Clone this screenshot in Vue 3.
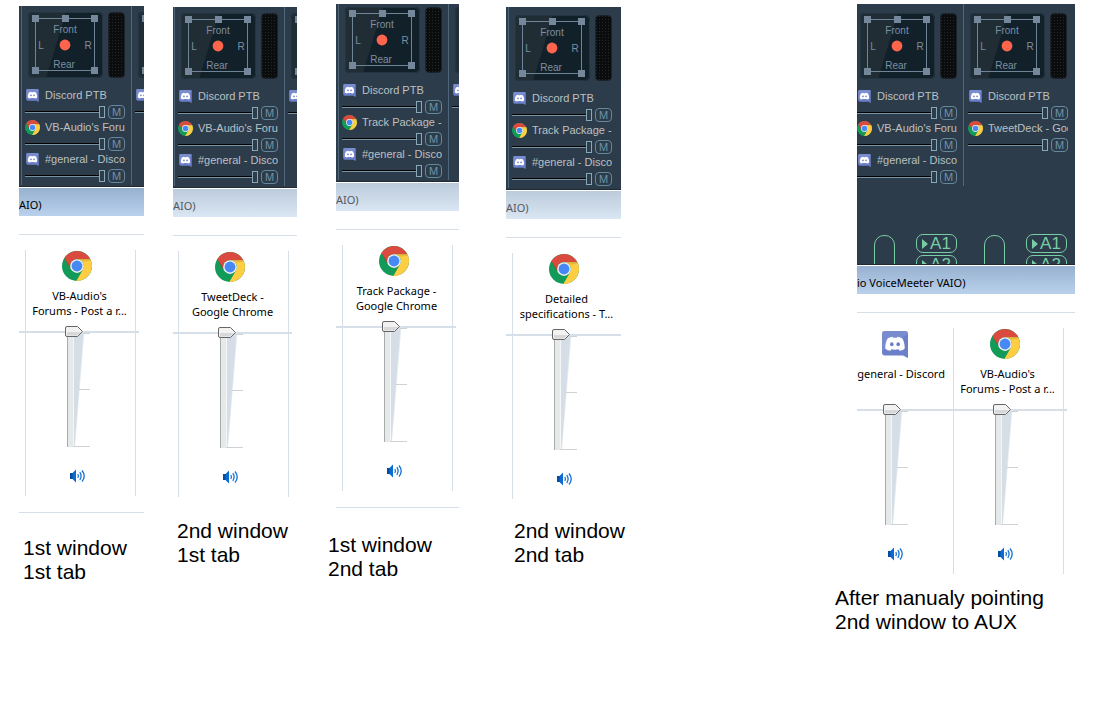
<script setup>
const discord = 'discord'
const chrome = 'chrome'

const ptb = { icon: discord, name: 'Discord PTB' }
const general = { icon: discord, name: '#general - Discor' }
const forums = { icon: chrome, name: "VB-Audio's Foru" }
const track = { icon: chrome, name: 'Track Package -' }
const tweet = { icon: chrome, name: 'TweetDeck - Goo' }

const full = (...rows) => ({ rows })
const edge = { rows: [{ icon: discord, name: '' }], edge: true }

const postSession = { icon: chrome, lines: ["VB-Audio's", 'Forums - Post a r...'] }

const clips = [
  {
    id: 'one', title: 'AIO)', active: true, closed: true,
    strips: [full(ptb, forums, general), edge],
    sessions: [postSession],
    caption: ['1st window', '1st tab'],
  },
  {
    id: 'two', title: 'AIO)',
    strips: [full(ptb, forums, general), edge],
    sessions: [{ icon: chrome, lines: ['TweetDeck -', 'Google Chrome'] }],
    caption: ['2nd window', '1st tab'],
  },
  {
    id: 'three', title: 'AIO)', closed: true,
    strips: [full(ptb, track, general), edge],
    sessions: [{ icon: chrome, lines: ['Track Package -', 'Google Chrome'] }],
    caption: ['1st window', '2nd tab'],
  },
  {
    id: 'four', title: 'AIO)',
    strips: [full(ptb, track, general)],
    sessions: [{ icon: chrome, lines: ['Detailed', 'specifications - T...'] }],
    caption: ['2nd window', '2nd tab'],
  },
  {
    id: 'five', title: 'io VoiceMeeter VAIO)', active: true, buses: true,
    strips: [full(ptb, forums, general), full(ptb, tweet)],
    sessions: [{ icon: discord, lines: ['#general - Discord'] }, postSession],
    caption: ['After manualy pointing', '2nd window to AUX'],
  },
]
</script>

<template>
  <svg class="defs" aria-hidden="true">
    <symbol id="chrome" viewBox="0 0 48 48">
      <circle cx="24" cy="24" r="24" fill="#119a58" />
      <path d="M3.8 11A24 24 0 0 1 45.3 13H24A11 11 0 0 0 14.5 29.5Z" fill="#db4a3e" />
      <path d="M45.3 13A24 24 0 0 1 22.9 48L33.5 29.5A11 11 0 0 0 24 13Z" fill="#ffcd42" />
      <path d="M24 13H45.3L46 15.500L32 17Z" fill="#d9a62e" opacity=".5" />
      <path d="M3.800 11L14.500 29.500L13 24Z" fill="#8c2f28" opacity=".5" />
      <circle cx="24" cy="24" r="11" fill="#f3f1f1" />
      <circle cx="24" cy="24" r="8.700" fill="#4688f4" />
    </symbol>
    <symbol id="discord" viewBox="0 0 26 27">
      <path d="M3 0H23Q26 0 26 3V27L21 24.500H3Q0 24.500 0 21.500V3Q0 0 3 0Z" fill="#6c7fc9" />
      <path d="M3 0H23Q26 0 26 3L0 20V3Q0 0 3 0Z" fill="#8797d6" opacity=".55" />
      <path
        fill="#fff"
        d="M10.500 5.800C7.500 6.200 6 7.300 5.300 8C3.800 11 3.200 14.300 3.300 17.500C4.800 19 6.500 19.700 8.400 19.800L9.500 18.300Q13 19.200 16.500 18.300L17.600 19.800C19.500 19.700 21.200 19 22.700 17.500C22.800 14.300 22.200 11 20.700 8C20 7.300 18.500 6.200 15.500 5.800L15 6.800Q13 6.500 11 6.800Z"
      />
      <ellipse cx="9.800" cy="13.200" rx="1.800" ry="2" fill="#6c7fc9" />
      <ellipse cx="16.200" cy="13.200" rx="1.800" ry="2" fill="#6c7fc9" />
    </symbol>
  </svg>

  <main class="board">
    <section v-for="clip in clips" :key="clip.id" class="column" :class="clip.id">
      <div class="clip">
        <div class="panel">
          <div class="strips">
            <div v-for="(strip, s) in clip.strips" :key="s" class="strip">
              <div class="scope">
                <svg class="pad" viewBox="0 0 75 66" role="img" aria-label="Panner">
                  <rect width="75" height="66" rx="5" fill="#12202a" />
                  <path d="M5 0H38L18 66H5Q0 66 0 61V5Q0 0 5 0Z" fill="#212d35" />
                  <rect x=".5" y=".5" width="74" height="65" rx="5" fill="none" stroke="#243542" />
                  <rect x="7.500" y="6.500" width="59" height="52" fill="none" stroke="#6f8496" />
                  <g fill="#75879a">
                    <rect x="4" y="3" width="7" height="7" />
                    <rect x="34" y="3" width="7" height="7" />
                    <rect x="63" y="3" width="7" height="7" />
                    <rect x="4" y="55" width="7" height="7" />
                    <rect x="63" y="55" width="7" height="7" />
                  </g>
                  <circle cx="37" cy="33" r="5.400" fill="#ff654c" />
                  <g v-if="!strip.edge" class="pad-text">
                    <text x="37" y="21">Front</text>
                    <text x="13" y="37">L</text>
                    <text x="60" y="37">R</text>
                    <text x="36" y="56">Rear</text>
                  </g>
                </svg>
                <div class="meter"></div>
              </div>
              <div class="rows">
                <div v-for="(row, r) in strip.rows" :key="r" class="row">
                  <label class="app" :for="`${clip.id}-${s}-${r}`">
                    <svg class="app-icon" :class="row.icon"><use :href="`#${row.icon}`" /></svg>
                    <span class="app-name">{{ row.name }}</span>
                  </label>
                  <div class="control">
                    <input :id="`${clip.id}-${s}-${r}`" class="gain" type="range" value="100" />
                    <button v-if="!strip.edge" class="mute">M</button>
                  </div>
                </div>
              </div>
            </div>
          </div>
          <div v-if="clip.buses" class="buses">
            <div v-for="n in 2" :key="n" class="bus">
              <div class="tube"></div>
              <div class="outputs">
                <button v-for="out in ['A1', 'A2']" :key="out" class="output">
                  <svg class="play" viewBox="0 0 6 10"><path d="M0 0L6 5L0 10Z" fill="#79cda4" /></svg>
                  {{ out }}
                </button>
              </div>
            </div>
          </div>
        </div>

        <div class="title" :class="{ active: clip.active }">{{ clip.title }}</div>

        <div class="mixer" :class="{ closed: clip.closed }">
          <div class="sessions">
            <div v-for="(session, i) in clip.sessions" :key="i" class="session">
              <div class="session-icon">
                <svg :class="session.icon"><use :href="`#${session.icon}`" /></svg>
              </div>
              <label class="session-name" :for="`${clip.id}-vol-${i}`">
                <span v-for="line in session.lines" :key="line">{{ line }}</span>
              </label>
              <div class="fader">
                <svg class="scale" viewBox="0 0 26 122" aria-hidden="true">
                  <rect x="2" y="5" width="6" height="116" fill="#e6e9e9" />
                  <rect x="2" y="5" width="1" height="116" fill="#a8abab" />
                  <path d="M8.500 6H19.500L10 121H8.500Z" fill="#e9eef2" />
                  <path d="M9 6H18.500L9.500 121H9Z" fill="#d5dee6" />
                  <path d="M18 7.500H25M14 63.500H25M8 120.500H25" stroke="#cfd2d3" />
                </svg>
                <input :id="`${clip.id}-vol-${i}`" class="volume" type="range" value="100" />
              </div>
              <button class="speaker" aria-label="Mute">
                <svg viewBox="0 0 16 14">
                  <path d="M0 4H2.500L6 0.500V13.500L2.500 10H0Z" fill="#0a6bd0" />
                  <path d="M0 4H2.500V10H0Z" fill="#064c9c" />
                  <g fill="none" stroke="#1672d2" stroke-width="1.300">
                    <path d="M7.800 5Q9.200 7 7.800 9" />
                    <path d="M9.800 3.200Q12.400 7 9.800 10.800" />
                    <path d="M12 1.500Q16.400 7 12 12.500" />
                  </g>
                </svg>
              </button>
            </div>
          </div>
        </div>
      </div>

      <p class="caption">
        <span v-for="line in clip.caption" :key="line">{{ line }}</span>
      </p>
    </section>
  </main>
</template>

<style>
body {
  background: #fff;
}
</style>

<style scoped>
.defs {
  position: absolute;
  width: 0;
  height: 0;
}
.board {
  display: grid;
  grid-template-columns: 154fr 156fr 177fr 329fr 240fr;
  align-items: start;
  padding: 0 18px 0 19px;
  font-family: "Liberation Sans", Arial, sans-serif;
}
.column {
  min-width: 0;
}
button {
  margin: 0;
  padding: 0;
  border: 0;
  background: none;
  font-family: inherit;
}
.clip {
  overflow: hidden;
}

/* Per-clip crop positions */
.one { padding: 6px 29px 0 0; }
.two { padding: 7px 32px 0 0; }
.three { padding: 4px 47px 0 7px; }
.four { padding: 7px 214px 0 0; }
.five { padding: 4px 0 0 22px; }

.one .panel { padding: 6px 0 0 2px; }
.two .panel { padding: 6px 0 0 1px; }
.three .panel { padding: 3px 0 0 2px; }
.four .panel { padding: 8px 0 0 2px; }
.five .panel { padding: 9px 0 0 0; }
.five .strips,
.five .buses { margin-left: -4px; }

.sessions { margin-left: 6px; }
.two .sessions { margin-left: 5px; }
.five .sessions { margin-left: -14px; }

/* VoiceMeeter panel */
.panel {
  background: #2c3c4b;
  border-bottom: 1px solid #1f2a35;
}
.strips {
  display: flex;
}
.strip {
  flex: none;
  width: 110px;
  height: 174px;
  position: relative;
}
.strip::before {
  content: "";
  position: absolute;
  left: 0;
  top: -9px;
  bottom: 1px;
  width: 1px;
  background: #4d6679;
}
.scope {
  display: flex;
  gap: 5px;
  padding-left: 7px;
}
.pad {
  width: 75px;
  height: 66px;
}
.pad-text {
  fill: #7d8fa0;
  font-size: 10px;
}
.pad-text text {
  text-anchor: middle;
}
.meter {
  box-sizing: border-box;
  width: 17px;
  height: 66px;
  border: 1px solid #1b2229;
  border-radius: 4px;
  background: repeating-linear-gradient(#0000 0 1px, #0b0c0d 1px 3px),
    repeating-linear-gradient(90deg, #23272a 0 1px, #0b0c0d 1px 3px);
}
.rows {
  padding: 10px 6px 0 4px;
}
.five .strip + .strip .rows {
  padding: 10px 5px 0;
}
.row {
  height: 32px;
}
.app {
  display: grid;
  grid-template-columns: 15px 80px;
  gap: 5px;
  align-items: center;
  height: 15px;
  margin-bottom: 2px;
}
.app-icon {
  width: 15px;
  height: 15px;
}
.app-icon.discord {
  height: 13px;
}
.app-name {
  overflow: hidden;
  color: #bcc0c2;
  font-size: 11px;
  line-height: 15px;
  white-space: nowrap;
}
.control {
  display: flex;
  gap: 3px;
}
.gain {
  appearance: none;
  width: 80px;
  height: 14px;
  margin: 0;
  background: linear-gradient(#0000 6px, #000 6px 7px, #7595a6 7px 8px, #0000 8px);
}
.gain::-webkit-slider-thumb {
  appearance: none;
  box-sizing: border-box;
  width: 6px;
  height: 12px;
  border: 1px solid #86a8b9;
  background: #2c3c4b;
}
.mute {
  box-sizing: border-box;
  width: 17px;
  height: 14px;
  border: 1px solid #64879b;
  border-radius: 4px;
  color: #6f93a8;
  font-size: 11px;
  line-height: 12px;
}
.buses {
  display: flex;
  height: 30px;
  margin-top: 47px;
  overflow: hidden;
}
.bus {
  box-sizing: border-box;
  display: flex;
  justify-content: space-between;
  flex: none;
  width: 110px;
  padding: 0 6px 0 21px;
}
.tube {
  box-sizing: border-box;
  width: 21px;
  height: 50px;
  margin-top: 1px;
  border: 1px solid #79cda4;
  border-radius: 10px;
}
.outputs {
  display: grid;
  gap: 2px;
  align-content: start;
}
.output {
  box-sizing: border-box;
  display: flex;
  align-items: center;
  justify-content: center;
  gap: 2px;
  width: 41px;
  height: 19px;
  border: 1px solid #79cda4;
  border-radius: 7px;
  color: #79cda4;
  font-size: 17px;
  line-height: 17px;
}
.play {
  width: 6px;
  height: 10px;
}

/* Windows volume mixer */
.title {
  height: 28px;
  margin-top: 1px;
  background: linear-gradient(#bccbdb, #dae6f3);
  color: #55585c;
  font: 11px/33px "Noto Sans", "Open Sans", sans-serif;
  white-space: nowrap;
}
.title.active {
  background: linear-gradient(#97b1d0, #b9d1ec);
  color: #000;
}
.mixer {
  margin-top: 18px;
  padding-top: 15px;
  border-top: 1px solid #d6dfe7;
}
.mixer.closed {
  padding-bottom: 16px;
  border-bottom: 1px solid #d6dfe7;
}
.sessions {
  position: relative;
  display: flex;
  width: max-content;
}
.sessions::before {
  content: "";
  position: absolute;
  left: -14px;
  right: -3px;
  top: 81px;
  height: 2px;
  background: #d6dfe7;
}
.session {
  box-sizing: border-box;
  position: relative;
  display: flex;
  flex-direction: column;
  align-items: center;
  width: 111px;
  height: 246px;
  padding: 1px 6px 0 0;
  border: solid #d6dfe7;
  border-width: 0 1px;
}
.four .session {
  border-right-color: transparent;
}
.session + .session {
  margin-left: -1px;
}
.session-icon {
  display: grid;
  place-items: center start;
  width: 32px;
  height: 30px;
}
.session-icon .chrome {
  width: 30px;
  height: 30px;
}
.session-icon .discord {
  width: 26px;
  height: 27px;
  margin-left: 2px;
}
.session-name {
  height: 30px;
  margin: 7px -4px 8px 0;
  color: #000;
  font: 11px/15px "Noto Sans", "Open Sans", sans-serif;
  text-align: center;
  white-space: nowrap;
}
.session-name span,
.caption span {
  display: block;
}
.fader {
  display: grid;
  width: 26px;
  height: 122px;
}
.fader > * {
  grid-area: 1 / 1;
}
.scale {
  width: 26px;
  height: 122px;
}
.volume {
  appearance: none;
  writing-mode: vertical-lr;
  direction: rtl;
  width: 18px;
  height: 122px;
  margin: 0;
  background: none;
}
.volume::-webkit-slider-thumb {
  appearance: none;
  width: 18px;
  height: 11px;
  background: url("data:image/svg+xml,%3Csvg xmlns='http://www.w3.org/2000/svg' viewBox='0 0 18 11'%3E%3Cpath d='M2 .5H12.500L17.500 5.500L12.500 10.500H2Q.5 10.500 .5 9V2Q.5 .5 2 .5Z' fill='%23f2f2f2' stroke='%23666'/%3E%3Cpath d='M2 6H16L12 9.500H2Z' fill='%23d8d8d8'/%3E%3C/svg%3E") no-repeat;
}
.speaker {
  width: 16px;
  height: 14px;
  margin-top: 21px;
}
.speaker svg {
  display: block;
  width: 16px;
  height: 14px;
}

/* Captions */
.caption {
  margin: 22px 0 0;
  color: #000;
  font-size: 21px;
  line-height: 24px;
  white-space: nowrap;
}
.one .caption { margin-top: 23px; padding-left: 4px; }
.two .caption { padding-left: 4px; }
.three .caption { margin: 25px 0 0 -8px; }
.four .caption { margin-top: 20px; padding-left: 8px; }
.five .caption { margin: 12px 0 0 -22px; }
</style>
